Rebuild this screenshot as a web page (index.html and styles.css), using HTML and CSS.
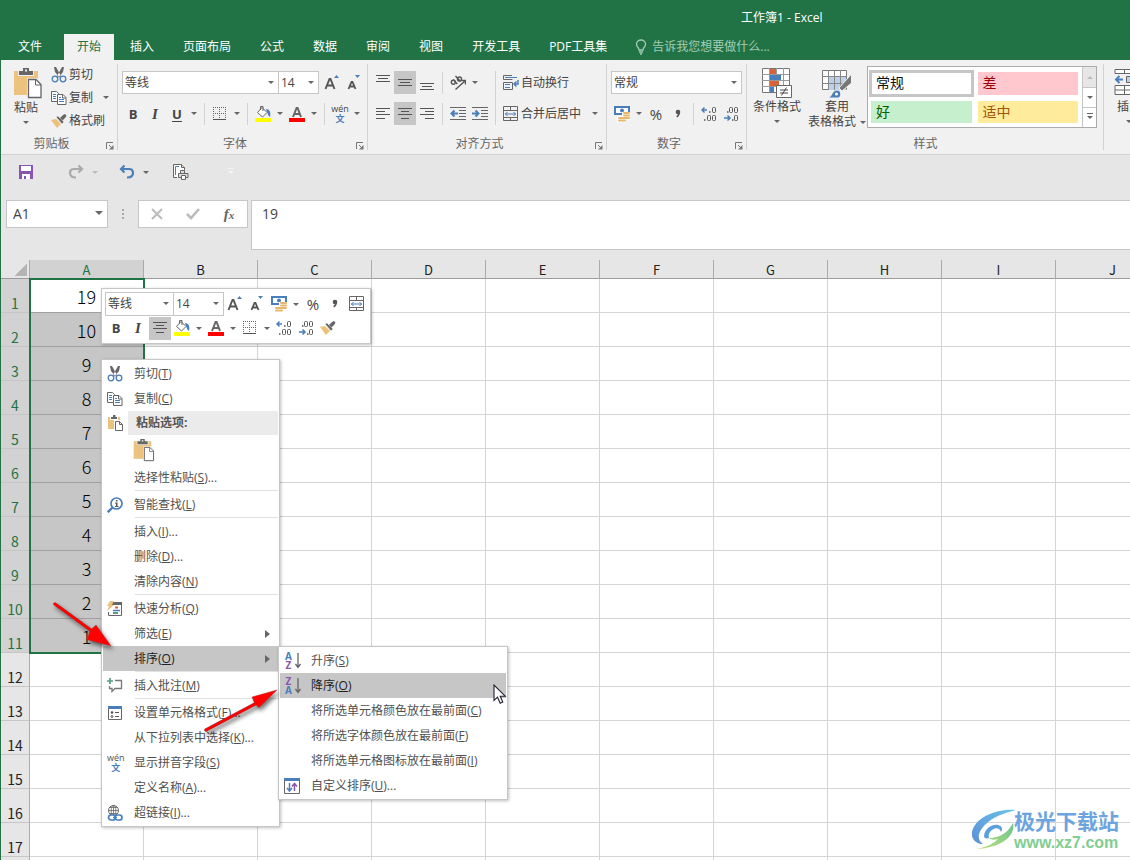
FILE: index.html
```html
<!DOCTYPE html>
<html lang="zh-CN">
<head>
<meta charset="utf-8">
<title>工作簿1 - Excel</title>
<link rel="stylesheet" href="styles.css">
</head>
<body>
<svg class="sprite" aria-hidden="true">
  <defs>
    <linearGradient id="swirl-blue" x1="0" y1="1" x2="1" y2="0"><stop offset="0" stop-color="#5b8fd6"/><stop offset="1" stop-color="#6cc3ea"/></linearGradient>
    <linearGradient id="swirl-green" x1="0" y1="1" x2="1" y2="0"><stop offset="0" stop-color="#c3e07a"/><stop offset="1" stop-color="#63c58c"/></linearGradient>
  </defs>
  <symbol id="i-cut" viewBox="0 0 16 16"><path d="M3 0l2 0L10 9 8.500 10.500 4 5zM13 0l-2 0L6 9l1.500 1.500L12 5z" fill="#666"/><circle cx="4" cy="12" r="2.800" fill="none" stroke="#4a7ebb" stroke-width="1.300"/><circle cx="12" cy="12" r="2.800" fill="none" stroke="#4a7ebb" stroke-width="1.300"/></symbol>
  <symbol id="i-copy" viewBox="0 0 16 16"><path d="M.500 1.500h5l2 2v8h-7z" fill="#fff" stroke="#666"/><path d="M2 4.500h3M2 6.500h3M2 8.500h3" stroke="#4a7ebb"/><path d="M6.500 4.500h5.500l3 3v7H6.500z" fill="#fff" stroke="#666"/><path d="M11.500 4.500v3.500H15" fill="none" stroke="#666"/><path d="M8 7.500h2M8 9.500h5M8 11.500h5" stroke="#4a7ebb"/></symbol>
  <symbol id="i-brush" viewBox="0 0 16 16"><path d="M0 7l5-1 5 5-4 4z" fill="#ecc17c"/><path d="M5 4l2-1 6 6-2 2z" fill="#666" stroke="#f1f1f1" stroke-width=".6"/><path d="M9 5l3-3 2-1 1.500 1.500L14.500 4.500 11.500 7.500z" fill="#666"/></symbol>
  <symbol id="i-paste" viewBox="0 0 30 32"><path d="M1 4h24v24H1z" fill="#ecc27f"/><path d="M5 3h16v6H5z" fill="#f1f1f1"/><path d="M6 8V4h4V1h6v3h4v4z" fill="#666"/><path d="M12 2.500h2v2h-2z" fill="#f1f1f1"/><path d="M14 11h10l5 5v16H14z" fill="#f1f1f1"/><path d="M15.500 12.500h7.500l5 5v13H15.500z" fill="#fff" stroke="#666" stroke-width="1.300"/><path d="M22.500 12.500v5.500H28" fill="none" stroke="#666"/></symbol>
  <symbol id="i-paste-small" viewBox="0 0 16 16"><path d="M1 2h12v12H1z" fill="#ecc27f"/><path d="M3 1h8v4H3z" fill="#fff"/><path d="M4 4V2h2V0h2.500v2H10v2z" fill="#666"/><path d="M7 5h6l3 3v8H7z" fill="#fff"/><path d="M8.500 6.500h4l3 3v6h-7z" fill="#fff" stroke="#666"/><path d="M12.500 6.500v3h3" fill="none" stroke="#666"/></symbol>
  <symbol id="i-grow" viewBox="0 0 16 16"><path d="M1.500 14L5.500 4h1L10.500 14M3.500 10.500h5.500" fill="none" stroke="#555" stroke-width="1.900"/><path d="M10 3l2.500-3L15 3z" fill="#4a7ebb"/></symbol>
  <symbol id="i-shrink" viewBox="0 0 16 16"><path d="M2.500 14L5.500 7h1L9.500 14M4 11.500h4" fill="none" stroke="#555" stroke-width="1.800"/><path d="M9 0h5l-2.500 3z" fill="#4a7ebb"/></symbol>
  <symbol id="i-border" viewBox="0 0 16 16"><path d="M1 1.500h14M1 7.500h14M1.500 1v12M7.500 1v12M13.500 1v12" stroke="#666" stroke-dasharray="1 1"/><path d="M1 13.500h13" stroke="#555"/></symbol>
  <symbol id="i-fill" viewBox="0 0 16 16"><path d="M7 1.500l5 5L7.500 11 2.500 6.500z" fill="#fff" stroke="#666"/><path d="M5.500 4V.5h2.500V5" fill="none" stroke="#666"/><path d="M11 3c4 0 5 4 4 8-2-1-2-3-3-5z" fill="#4a7ebb"/><path d="M0 12h16v4H0z" fill="#ff0"/></symbol>
  <symbol id="i-color" viewBox="0 0 16 16"><path d="M4 11L7.600 2h1L12 11M5.500 8h5.500" fill="none" stroke="#666" stroke-width="2"/><path d="M0 12h16v4H0z" fill="red"/></symbol>
  <symbol id="i-top" viewBox="0 0 16 16"><path d="M1 .500h14M3 3.500h10M1 6.500h14" stroke="#555"/></symbol>
  <symbol id="i-middle" viewBox="0 0 16 16"><path d="M1 4.500h14M3 7.500h10M1 10.500h14" stroke="#555"/></symbol>
  <symbol id="i-bottom" viewBox="0 0 16 16"><path d="M1 8.500h14M3 11.500h10M1 14.500h14" stroke="#555"/></symbol>
  <symbol id="i-left" viewBox="0 0 16 16"><path d="M1 2.500h14M1 5.500h9M1 8.500h14M1 12.500h9" stroke="#555"/></symbol>
  <symbol id="i-center" viewBox="0 0 16 16"><path d="M1 2.500h14M4 5.500h8M1 8.500h14M4 12.500h8" stroke="#555"/></symbol>
  <symbol id="i-right" viewBox="0 0 16 16"><path d="M1 2.500h14M6 5.500h9M1 8.500h14M6 12.500h9" stroke="#555"/></symbol>
  <symbol id="i-outdent" viewBox="0 0 16 16"><path d="M0 1.500h16M9 4.500h7M9 7.500h7M9 10.500h7M0 13.500h16" stroke="#666"/><path d="M8 7.500H2M4.500 4.500l-3 3 3 3" fill="none" stroke="#4a7ebb" stroke-width="2"/></symbol>
  <symbol id="i-indent" viewBox="0 0 16 16"><path d="M0 1.500h16M9 4.500h7M9 7.500h7M9 10.500h7M0 13.500h16" stroke="#666"/><path d="M0 7.500h6M3.500 4.500l3 3-3 3" fill="none" stroke="#4a7ebb" stroke-width="2"/></symbol>
  <symbol id="i-orient" viewBox="0 0 16 16"><ellipse cx="3.300" cy="7.300" rx="2" ry="2" fill="none" stroke="#555" stroke-width="1.400"/><path d="M3.300 4.500l4 4.500M5.500 1l5 5.500" fill="none" stroke="#555" stroke-width="1.400"/><circle cx="9.500" cy="4" r="2" fill="none" stroke="#555" stroke-width="1.400"/><path d="M5.500 14.500L15 6M11.500 5.500H15.500V9.500" fill="none" stroke="#555" stroke-width="1.400"/></symbol>
  <symbol id="i-wrap" viewBox="0 0 16 16"><path d="M9 .500H.500v4h9M.500 7.500h9v7h-9z" fill="none" stroke="#666"/><path d="M2 2.500h12M2 9.500h5M2 12.500h5" stroke="#4a7ebb"/><path d="M15 5v4h-4M13.500 6.500L11 9l2.500 2.500" fill="none" stroke="#4a7ebb" stroke-width="1.500"/></symbol>
  <symbol id="i-merge" viewBox="0 0 16 16"><path d="M.500.500h14v14H.500zM0 4.500h15M0 11.500h15M7.500 0v4M7.500 12v3" fill="none" stroke="#666"/><path d="M2 8h11M4.500 6L2.500 8l2 2M10.500 6l2 2-2 2" fill="none" stroke="#4a7ebb"/></symbol>
  <symbol id="i-money" viewBox="0 0 16 16"><path d="M1 1h14v7H1z" fill="#fff" stroke="#4a7ebb" stroke-width="2"/><circle cx="8" cy="4.500" r="2" fill="#4a7ebb"/><path d="M8 6h8v8h-4v2H3v-6h5z" fill="#fff"/><rect x="9" y="6" width="7" height="2" rx="1" fill="#e8b66c"/><rect x="9" y="8.500" width="7" height="2" rx="1" fill="#e8b66c"/><rect x="9" y="11" width="7" height="2" rx="1" fill="#e8b66c"/><rect x="4" y="11" width="6" height="2" rx="1" fill="#e8b66c"/><rect x="4" y="13.500" width="8" height="2" rx="1" fill="#e8b66c"/></symbol>
  <symbol id="i-incdec" viewBox="0 0 16 16"><path d="M1 4h5M3.500 1.500L1 4l2.500 2.500" fill="none" stroke="#4a7ebb" stroke-width="1.500"/><path d="M8 6h1.500M3 14h1.500" stroke="#555" stroke-width="1.400"/><rect x="11.500" y="1.500" width="3" height="5" rx="1" fill="none" stroke="#555"/><rect x="6.500" y="9.500" width="3" height="5" rx="1" fill="none" stroke="#555"/><rect x="11.500" y="9.500" width="3" height="5" rx="1" fill="none" stroke="#555"/></symbol>
  <symbol id="i-decdec" viewBox="0 0 16 16"><path d="M1 12h6M4.500 9.500L7 12l-2.500 2.500" fill="none" stroke="#4a7ebb" stroke-width="1.500"/><path d="M4 6h1.500M9 14h1.500" stroke="#555" stroke-width="1.400"/><rect x="11.500" y="9.500" width="3" height="5" rx="1" fill="none" stroke="#555"/><rect x="6.500" y="1.500" width="3" height="5" rx="1" fill="none" stroke="#555"/><rect x="11.500" y="1.500" width="3" height="5" rx="1" fill="none" stroke="#555"/></symbol>
  <symbol id="i-comma" viewBox="0 0 16 16"><circle cx="8" cy="6" r="2.300" fill="#555"/><path d="M9.300 6c0 2.500-.8 3.800-2.600 4.800" fill="none" stroke="#555" stroke-width="1.500"/></symbol>
  <symbol id="i-launch" viewBox="0 0 8 8"><path d="M.500 7V.500H7M3 3l3 3" fill="none" stroke="#777"/><path d="M7.500 3v4.500H3z" fill="#777"/></symbol>
  <symbol id="i-cond" viewBox="0 0 30 30"><path d="M.500.500h27v24h-27z" fill="#fff" stroke="#777"/><path d="M7.500 0v24M14.500 0v24M21.500 0v24M0 6.500h27M0 12.500h27M0 18.500h27" stroke="#999"/><path d="M8 1h6v5H8zM8 13h9v5H8z" fill="#d9623b"/><path d="M8 7h11v5H8zM8 19h4v5H8z" fill="#4a7ebb"/><path d="M14.500 17.500h15v12h-15z" fill="#fff" stroke="#666"/><path d="M18 22h8M18 25h8M24.500 19.500l-5 8" stroke="#444"/></symbol>
  <symbol id="i-table" viewBox="0 0 30 30"><path d="M.500 2.500h24v19h-24z" fill="#fff" stroke="#777"/><path d="M7 9h17v13H7z" fill="#bdd0e9"/><path d="M6.500 2v20M12.500 2v20M18.500 2v20M0 8.500h25M0 15.500h25" stroke="#888"/><path d="M29.500 6v9l-9.500 8-3-3z" fill="#777" stroke="#f1f1f1"/><path d="M6 30c4-1 4-8 9-8 4 0 5 5 2 8z" fill="#4a7ebb" stroke="#f1f1f1"/><circle cx="14.500" cy="26" r="1.500" fill="#fff"/></symbol>
  <symbol id="i-insert" viewBox="0 0 30 30"><path d="M1 1.500h28v4H1zM10.500 1v5M20.500 1v5M1 17.500h28v9H1zM1 22h28M10.500 17v10M20.500 17v10" fill="#fff" stroke="#666"/><path d="M12.500 8.500h16v6h-16z" fill="#bdd0e9" stroke="#666"/><path d="M9 11.500H3M5.500 8l-3.500 3.500L5.500 15" fill="none" stroke="#4a7ebb" stroke-width="2"/></symbol>
  <symbol id="i-save" viewBox="0 0 16 16"><path d="M1 1h14v14H1z" fill="#8a55ad"/><path d="M3 2h10v5H3zM4 10h8v5H4z" fill="#fff"/><path d="M6 12h2v3H6z" fill="#8a55ad"/></symbol>
  <symbol id="i-undo" viewBox="0 0 16 16"><path d="M5.500 1.500L2 5l3.500 3.500M2 5h8c3 0 4 2 4 4s-1 4.500-6 4.500" fill="none" stroke="currentColor" stroke-width="2.200"/></symbol>
  <symbol id="i-preview" viewBox="0 0 16 16"><path d="M4 13.500H.500V.500h8l3 3V6" fill="#fff" stroke="#666"/><path d="M2.500 11V2.500H6" fill="none" stroke="#4a7ebb"/><path d="M8.500.500v3h3M7.500 9V6.500h4V9M5.500 9.500h9.500v4H5.500z" fill="#ddd" stroke="#666"/><path d="M8.500 11.500h4v4h-4z" fill="#fff" stroke="#666"/></symbol>
  <symbol id="i-x" viewBox="0 0 16 16"><path d="M3 3l10 10M13 3L3 13" stroke="#bbb" stroke-width="2"/></symbol>
  <symbol id="i-check" viewBox="0 0 16 16"><path d="M2 8l4 4 8-9" fill="none" stroke="#bbb" stroke-width="2.600"/></symbol>
  <symbol id="i-bulb" viewBox="0 0 12 16"><path d="M4 11C4 8.500 1.500 8 1.500 5.300a4.500 4.300 0 0 1 9 0C10.500 8 8 8.500 8 11zM4 13h4M5 15h2" fill="none" stroke="#a3cdb4" stroke-width="1.300"/></symbol>
  <symbol id="i-find" viewBox="0 0 16 16"><circle cx="9.500" cy="6.500" r="5.500" fill="#fff" stroke="#4a7ebb" stroke-width="1.700"/><path d="M5.500 10.500L.8 15.200" stroke="#4a7ebb" stroke-width="2.400"/><path d="M9 3h1.500v1.500H9zM8 5.500h2.500V9h1v1H8V9h1V6.500H8z" fill="#555"/></symbol>
  <symbol id="i-quick" viewBox="0 0 16 16"><path d="M5 2.500h9.500v12H1.500V11" fill="none" stroke="#666"/><path d="M5 1h10v3H5z" fill="#666"/><path d="M3 0h4L5 4h2L0 10l2-5H0z" fill="#ecc27f"/><path d="M8 6.500h3" stroke="#d9623b" stroke-width="2"/><path d="M6 9.500h7" stroke="#4a7ebb" stroke-width="1.500"/><path d="M6 12h5" stroke="#55a080" stroke-width="2"/></symbol>
  <symbol id="i-note" viewBox="0 0 16 16"><path d="M8 2.500h6.500v8H8l-3 3v-3H2.500V8" fill="none" stroke="#777" stroke-width="1.300"/><path d="M3 0v6M0 3h6" stroke="#55a080" stroke-width="1.700"/></symbol>
  <symbol id="i-format" viewBox="0 0 16 16"><path d="M1.500 1.500h13v13h-13z" fill="#fff" stroke="#666"/><path d="M1 1h14v3H1z" fill="#4a7ebb"/><circle cx="5" cy="7.500" r="1.300" fill="#555"/><circle cx="5" cy="11.500" r="1" fill="none" stroke="#555"/><path d="M8 7.500h4M8 11.500h4" stroke="#555"/></symbol>
  <symbol id="i-link" viewBox="0 0 16 16"><circle cx="6.500" cy="5.500" r="5" fill="#fff" stroke="#666"/><path d="M1.500 5.500h10M6.500.500v10M3 2.500h7M2.500 8.500h8" stroke="#666" stroke-width=".8"/><ellipse cx="6.500" cy="5.500" rx="2.300" ry="5" fill="none" stroke="#666" stroke-width=".8"/><rect x="1.500" y="10" width="7" height="5" rx="2.500" fill="#fff" stroke="#4a7ebb" stroke-width="1.700"/><rect x="8" y="10" width="7" height="5" rx="2.500" fill="#fff" stroke="#4a7ebb" stroke-width="1.700"/><path d="M6 12.500h4" stroke="#4a7ebb" stroke-width="1.500"/></symbol>
  <symbol id="i-down" viewBox="0 0 6 16"><path d="M3 0v14M.500 11L3 14.500 5.500 11" fill="none" stroke="#666" stroke-width="1.300"/></symbol>
  <symbol id="i-custom" viewBox="0 0 16 16"><path d="M.500 1h15v14.500H.500z" fill="#fff" stroke="#666"/><path d="M0 0h16v3H0z" fill="#4a7ebb"/><path d="M5.500 5v8M3 10l2.500 3L8 10" fill="none" stroke="#4a7ebb" stroke-width="1.500"/><path d="M10.500 13V5.500M8 8.500l2.500-3 2.500 3" fill="none" stroke="#8a55ad" stroke-width="1.500"/></symbol>
</svg>

<div class="app">
  <header class="titlebar"><h1>工作簿1 - Excel</h1></header>

  <nav class="tabs" aria-label="功能区">
    <button class="tab file">文件</button><button class="tab active">开始</button><button class="tab">插入</button><button class="tab">页面布局</button><button class="tab">公式</button><button class="tab">数据</button><button class="tab">审阅</button><button class="tab">视图</button><button class="tab">开发工具</button><button class="tab">PDF工具集</button>
    <label class="tell"><svg width="12" height="16"><use href="#i-bulb"/></svg><input type="text" aria-label="告诉我您想要做什么" placeholder="告诉我您想要做什么..."></label>
  </nav>

  <section class="ribbon">
    <div class="group clipboard">
      <div class="body">
        <button class="big"><svg width="30" height="32"><use href="#i-paste"/></svg><span>粘贴</span><i class="caret"></i></button>
        <div class="stack">
          <button class="item"><svg class="ic"><use href="#i-cut"/></svg>剪切</button>
          <button class="item"><svg class="ic"><use href="#i-copy"/></svg>复制<i class="caret push"></i></button>
          <button class="item"><svg class="ic"><use href="#i-brush"/></svg>格式刷</button>
        </div>
      </div>
      <div class="foot">剪贴板<button class="launch" aria-label="剪贴板设置"><svg width="8" height="8"><use href="#i-launch"/></svg></button></div>
    </div>

    <div class="group font">
      <div class="body rows">
        <div class="row">
          <span class="combo family"><select aria-label="字体"><option>等线</option></select></span><span class="combo size"><select aria-label="字号"><option>14</option></select></span>
          <button class="tb lead" aria-label="增大字号"><svg class="ic"><use href="#i-grow"/></svg></button>
          <button class="tb" aria-label="减小字号"><svg class="ic"><use href="#i-shrink"/></svg></button>
        </div>
        <div class="row">
          <button class="tb"><b>B</b></button><button class="tb"><em>I</em></button><button class="tb"><b class="ul">U</b></button><button class="drop" aria-label="下划线选项"><i class="caret"></i></button>
          <span class="sep"></span>
          <button class="tb" aria-label="边框"><svg class="ic"><use href="#i-border"/></svg></button><button class="drop" aria-label="边框选项"><i class="caret"></i></button>
          <span class="sep"></span>
          <button class="tb" aria-label="填充颜色"><svg class="ic"><use href="#i-fill"/></svg></button><button class="drop" aria-label="填充选项"><i class="caret"></i></button>
          <button class="tb" aria-label="字体颜色"><svg class="ic"><use href="#i-color"/></svg></button><button class="drop" aria-label="颜色选项"><i class="caret"></i></button>
          <span class="sep"></span>
          <button class="tb pinyin"><span>wén</span><span>文</span></button><button class="drop" aria-label="拼音选项"><i class="caret"></i></button>
        </div>
      </div>
      <div class="foot">字体<button class="launch" aria-label="字体设置"><svg width="8" height="8"><use href="#i-launch"/></svg></button></div>
    </div>

    <div class="group align">
      <div class="body">
        <div class="rows">
          <div class="row">
            <button class="tb" aria-label="顶端对齐"><svg class="ic"><use href="#i-top"/></svg></button><button class="tb on" aria-label="垂直居中"><svg class="ic"><use href="#i-middle"/></svg></button><button class="tb" aria-label="底端对齐"><svg class="ic"><use href="#i-bottom"/></svg></button>
            <span class="sep"></span>
            <button class="tb" aria-label="方向"><svg class="ic"><use href="#i-orient"/></svg></button><button class="drop" aria-label="方向选项"><i class="caret"></i></button>
          </div>
          <div class="row">
            <button class="tb" aria-label="左对齐"><svg class="ic"><use href="#i-left"/></svg></button><button class="tb on" aria-label="居中"><svg class="ic"><use href="#i-center"/></svg></button><button class="tb" aria-label="右对齐"><svg class="ic"><use href="#i-right"/></svg></button>
            <span class="sep"></span>
            <button class="tb" aria-label="减少缩进量"><svg class="ic"><use href="#i-outdent"/></svg></button><button class="tb" aria-label="增加缩进量"><svg class="ic"><use href="#i-indent"/></svg></button>
          </div>
        </div>
        <span class="sep tall"></span>
        <div class="rows wide">
          <div class="row"><button class="item"><svg class="ic"><use href="#i-wrap"/></svg>自动换行</button></div>
          <div class="row"><button class="item"><svg class="ic"><use href="#i-merge"/></svg>合并后居中<i class="caret push"></i></button></div>
        </div>
      </div>
      <div class="foot">对齐方式<button class="launch" aria-label="对齐设置"><svg width="8" height="8"><use href="#i-launch"/></svg></button></div>
    </div>

    <div class="group number">
      <div class="body rows">
        <div class="row"><span class="combo full"><select aria-label="数字格式"><option>常规</option></select></span></div>
        <div class="row">
          <button class="tb" aria-label="会计数字格式"><svg class="ic"><use href="#i-money"/></svg></button><button class="drop" aria-label="货币选项"><i class="caret"></i></button>
          <button class="tb pct">%</button><button class="tb" aria-label="千位分隔样式"><svg class="ic"><use href="#i-comma"/></svg></button>
          <span class="sep"></span>
          <button class="tb" aria-label="增加小数位数"><svg class="ic"><use href="#i-incdec"/></svg></button><button class="tb" aria-label="减少小数位数"><svg class="ic"><use href="#i-decdec"/></svg></button>
        </div>
      </div>
      <div class="foot">数字<button class="launch" aria-label="数字设置"><svg width="8" height="8"><use href="#i-launch"/></svg></button></div>
    </div>

    <div class="group styles">
      <div class="body">
        <button class="big cond"><svg width="30" height="30"><use href="#i-cond"/></svg><span>条件格式</span><i class="caret"></i></button>
        <button class="big tablefmt"><svg width="30" height="30"><use href="#i-table"/></svg><span>套用</span><span class="line">表格格式<i class="caret"></i></span></button>
        <div class="gallery">
          <div class="swatches">
            <button class="sw normal">常规</button><button class="sw bad">差</button>
            <button class="sw good">好</button><button class="sw neutral">适中</button>
          </div>
          <div class="scroller">
            <button class="off" aria-label="上一行"><i class="caret up"></i></button><button aria-label="下一行"><i class="caret"></i></button><button aria-label="更多"><i class="caret more"></i></button>
          </div>
        </div>
      </div>
      <div class="foot">样式</div>
    </div>

    <div class="group cells">
      <div class="body"><button class="big"><svg width="30" height="30"><use href="#i-insert"/></svg><span>插入</span><i class="caret"></i></button></div>
    </div>
  </section>

  <div class="quick">
    <button class="q" aria-label="保存"><svg class="ic"><use href="#i-save"/></svg></button>
    <button class="q redo" aria-label="恢复"><svg class="ic flip"><use href="#i-undo"/></svg><i class="caret"></i></button>
    <button class="q undo" aria-label="撤消"><svg class="ic"><use href="#i-undo"/></svg><i class="caret"></i></button>
    <button class="q preview" aria-label="打印预览"><svg class="ic"><use href="#i-preview"/></svg></button>
    <button class="q custom" aria-label="自定义快速访问工具栏"><i class="caret more"></i></button>
  </div>

  <div class="formula">
    <span class="combo name"><input type="text" aria-label="名称框" value="A1"></span>
    <span class="dots"></span>
    <div class="fx"><button aria-label="取消"><svg class="ic"><use href="#i-x"/></svg></button><button aria-label="输入"><svg class="ic"><use href="#i-check"/></svg></button><button aria-label="插入函数"><em>f<small>x</small></em></button></div>
    <textarea aria-label="编辑栏">19</textarea>
  </div>

  <main class="sheet"><table id="grid"></table><div class="selection"></div></main>

  <div class="mini" role="toolbar" aria-label="浮动工具栏">
    <div class="row">
      <span class="combo mfamily"><select aria-label="字体"><option>等线</option></select></span><span class="combo msize"><select aria-label="字号"><option>14</option></select></span>
      <button class="tb" aria-label="增大字号"><svg class="ic"><use href="#i-grow"/></svg></button><button class="tb" aria-label="减小字号"><svg class="ic"><use href="#i-shrink"/></svg></button>
      <button class="tb" aria-label="会计数字格式"><svg class="ic"><use href="#i-money"/></svg></button><button class="drop" aria-label="货币选项"><i class="caret"></i></button>
      <button class="tb pct">%</button><button class="tb" aria-label="千位分隔样式"><svg class="ic"><use href="#i-comma"/></svg></button><button class="tb" aria-label="合并后居中"><svg class="ic"><use href="#i-merge"/></svg></button>
    </div>
    <div class="row">
      <button class="tb"><b>B</b></button><button class="tb"><em>I</em></button><button class="tb on" aria-label="居中"><svg class="ic"><use href="#i-center"/></svg></button>
      <button class="tb" aria-label="填充颜色"><svg class="ic"><use href="#i-fill"/></svg></button><button class="drop" aria-label="填充选项"><i class="caret"></i></button>
      <button class="tb" aria-label="字体颜色"><svg class="ic"><use href="#i-color"/></svg></button><button class="drop" aria-label="颜色选项"><i class="caret"></i></button>
      <button class="tb" aria-label="边框"><svg class="ic"><use href="#i-border"/></svg></button><button class="drop" aria-label="边框选项"><i class="caret"></i></button>
      <button class="tb" aria-label="增加小数位数"><svg class="ic"><use href="#i-incdec"/></svg></button><button class="tb" aria-label="减少小数位数"><svg class="ic"><use href="#i-decdec"/></svg></button><button class="tb" aria-label="格式刷"><svg class="ic"><use href="#i-brush"/></svg></button>
    </div>
  </div>

  <div class="menu context" role="menu">
    <button class="mi" role="menuitem"><span class="slot"><svg class="ic"><use href="#i-cut"/></svg></span><span>剪切(<u>T</u>)</span></button>
    <button class="mi" role="menuitem"><span class="slot"><svg class="ic"><use href="#i-copy"/></svg></span><span>复制(<u>C</u>)</span></button>
    <div class="mhead"><span class="slot"><svg class="ic"><use href="#i-paste-small"/></svg></span><strong>粘贴选项:</strong></div>
    <button class="mi pasteopt" role="menuitem" aria-label="粘贴"><svg width="22" height="24"><use href="#i-paste"/></svg></button>
    <button class="mi" role="menuitem"><span class="slot"></span><span>选择性粘贴(<u>S</u>)...</span></button>
    <hr>
    <button class="mi" role="menuitem"><span class="slot"><svg class="ic"><use href="#i-find"/></svg></span><span>智能查找(<u>L</u>)</span></button>
    <hr>
    <button class="mi" role="menuitem"><span class="slot"></span><span>插入(<u>I</u>)...</span></button>
    <button class="mi" role="menuitem"><span class="slot"></span><span>删除(<u>D</u>)...</span></button>
    <button class="mi" role="menuitem"><span class="slot"></span><span>清除内容(<u>N</u>)</span></button>
    <hr>
    <button class="mi" role="menuitem"><span class="slot"><svg class="ic"><use href="#i-quick"/></svg></span><span>快速分析(<u>Q</u>)</span></button>
    <button class="mi sub" role="menuitem"><span class="slot"></span><span>筛选(<u>E</u>)</span></button>
    <button class="mi sub hot" role="menuitem"><span class="slot"></span><span>排序(<u>O</u>)</span></button>
    <hr>
    <button class="mi" role="menuitem"><span class="slot"><svg class="ic"><use href="#i-note"/></svg></span><span>插入批注(<u>M</u>)</span></button>
    <hr>
    <button class="mi" role="menuitem"><span class="slot"><svg class="ic"><use href="#i-format"/></svg></span><span>设置单元格格式(<u>F</u>)...</span></button>
    <button class="mi" role="menuitem"><span class="slot"></span><span>从下拉列表中选择(<u>K</u>)...</span></button>
    <button class="mi" role="menuitem"><span class="slot"><span class="pinyin"><span>wén</span><span>文</span></span></span><span>显示拼音字段(<u>S</u>)</span></button>
    <button class="mi" role="menuitem"><span class="slot"></span><span>定义名称(<u>A</u>)...</span></button>
    <button class="mi" role="menuitem"><span class="slot"><svg class="ic"><use href="#i-link"/></svg></span><span>超链接(<u>I</u>)...</span></button>
  </div>

  <div class="menu submenu" role="menu">
    <button class="mi" role="menuitem"><span class="slot sort"><span><b class="a">A</b><b class="z">Z</b></span><svg width="6" height="16"><use href="#i-down"/></svg></span><span>升序(<u>S</u>)</span></button>
    <button class="mi hot" role="menuitem"><span class="slot sort"><span><b class="z">Z</b><b class="a">A</b></span><svg width="6" height="16"><use href="#i-down"/></svg></span><span>降序(<u>O</u>)</span></button>
    <button class="mi" role="menuitem"><span class="slot"></span><span>将所选单元格颜色放在最前面(<u>C</u>)</span></button>
    <button class="mi" role="menuitem"><span class="slot"></span><span>将所选字体颜色放在最前面(<u>F</u>)</span></button>
    <button class="mi" role="menuitem"><span class="slot"></span><span>将所选单元格图标放在最前面(<u>I</u>)</span></button>
    <button class="mi" role="menuitem"><span class="slot"><svg class="ic"><use href="#i-custom"/></svg></span><span>自定义排序(<u>U</u>)...</span></button>
  </div>

  <svg class="arrow first" width="72" height="56" viewBox="0 0 72 56"><path d="M5 5L42 32" stroke="#a33" stroke-width="3.400" stroke-linecap="round"/><path d="M5 5L42 32" stroke="red" stroke-width="2.400" stroke-linecap="round"/><path d="M61 47L37 40.500 40 31.500 46 26z" fill="red" stroke="#a33" stroke-width=".5"/></svg>
  <svg class="arrow second" width="84" height="52" viewBox="0 0 84 52"><path d="M5 44L54 18" stroke="#a33" stroke-width="3.400" stroke-linecap="round"/><path d="M5 44L54 18" stroke="red" stroke-width="2.400" stroke-linecap="round"/><path d="M76 4L58 21.500 54 18 51 11z" fill="red" stroke="#a33" stroke-width=".5"/></svg>
  <svg class="cursor" width="14" height="21" viewBox="0 0 14 21"><path d="M1 1v15.500l3.500-3.300 2.700 6 2.600-1.200-2.600-5.800h5z" fill="#fff" stroke="#223" stroke-width="1.100"/></svg>

  <a class="brand" href="#">
    <svg width="46" height="42" viewBox="0 0 46 42"><path d="M45 1C27-1 4 8 1 23c-1 8 5 12 11 12C5 31 7 22 15 15 22 8 33 4 45 1z" fill="url(#swirl-blue)"/><path d="M13 27c1-8 8-12 14-11 4 1 5 4 3 7-1-4-5-5-9-2-3 2-4 5-3 8-3 1-5 0-5-2z" fill="#5b9fdc"/><path d="M42 14c3 13-12 25-37 26 11-2 17-5 22-10-4 1-7 1-9-1C28 29 37 24 42 14z" fill="url(#swirl-green)"/></svg>
    <span class="words"><strong>极光下载站</strong><span class="url">www.xz7.com</span></span>
  </a>
</div>
<script src="sheet.js"></script>
</body>
</html>
```

FILE: styles.css
```css
* { box-sizing: border-box; }
body { margin: 0; font: 12px/16px "Open Sans", "Noto Sans CJK SC", sans-serif; color: #444; }
button, input, select, textarea { font: inherit; color: inherit; background: none; border: 0; padding: 0; margin: 0; border-radius: 0; outline: 0; }
button { display: flex; align-items: center; justify-content: center; white-space: nowrap; }
svg { display: block; flex: none; }
.sprite { position: absolute; width: 0; height: 0; }
.ic { width: 16px; height: 16px; }
.app { position: relative; display: flex; flex-direction: column; height: 100vh; overflow: hidden; border-left: 1px solid #217346; background: #e6e6e6; }

.titlebar { height: 34px; background: #217346; color: #fff; padding: 10px 0 0 740px; flex: none; }
.titlebar h1 { margin: 0; font: inherit; white-space: nowrap; }
.tabs { display: flex; gap: 3px; height: 26px; flex: none; padding-left: 4px; background: #217346; color: #fff; }
.tab { padding: 0 13px; }
.tab.file { margin-right: 6px; }
.tab.active { background: #f1f1f1; color: #217346; }
.tell { display: flex; align-items: center; gap: 5px; margin-left: 12px; flex: 1; }
.tell input { flex: 1; }
.tell input::placeholder { color: #a3cdb4; opacity: 1; }

.ribbon { display: flex; height: 95px; flex: none; background: #f1f1f1; border-bottom: 1px solid #d2d2d2; overflow: hidden; }
.group { position: relative; display: flex; flex-direction: column; flex: none; padding-top: 3px; }
.group::after { content: ""; position: absolute; right: 0; top: 4px; bottom: 4px; width: 1px; background: #d2d2d2; }
.body { display: flex; height: 70px; }
.foot { display: flex; justify-content: center; align-items: center; height: 21px; color: #666; padding-right: 16px; }
.launch { position: absolute; right: 4px; bottom: 4px; }
.clipboard { width: 117px; }
.font { width: 250px; }
.align { width: 239px; }
.number { width: 140px; }
.styles { width: 357px; }
.styles .foot { padding-right: 0; }
.cells { width: 120px; }
.rows { display: flex; flex-direction: column; gap: 8px; padding: 8px 3px 0 4px; }
.align .rows { padding-right: 0; }
.row { display: flex; align-items: center; height: 23px; }
.body .wide { padding-left: 7px; flex: 1; }
.big { flex-direction: column; justify-content: flex-start; padding-top: 4px; }
.big svg { margin-bottom: 1px; }
.big .caret { margin-top: 5px; }
.clipboard .big { width: 50px; }
.clipboard .big svg { margin-left: 4px; }
.big.cond { width: 60px; padding-top: 5px; }
.big.tablefmt { width: 60px; padding-top: 5px; }
.big .line { display: flex; align-items: center; gap: 4px; line-height: 14px; }
.big .line .caret { margin: 0; }
.cells .big { width: 50px; padding-top: 5px; }
.stack { display: flex; flex-direction: column; flex: 1; }
.stack .item { height: 23px; }
.item { justify-content: flex-start; gap: 2px; width: 100%; }
.push { margin-left: auto; margin-right: 9px; }
.tb { width: 22px; height: 23px; flex: none; font-size: 13px; }
.tb.on { background: #c6c6c6; }
.tb em, .fx em { font-family: "Liberation Serif", serif; font-weight: bold; font-size: 15px; }
.fx em { color: #666; }
.fx small { font-size: 11px; }
.ul { text-decoration: underline; text-underline-offset: 2px; }
.lead { margin-left: 2px; }
.pct { font-size: 15px; }
.drop { width: 12px; height: 23px; flex: none; }
.sep { width: 1px; height: 22px; margin: 0 4px; background: #d2d2d2; flex: none; }
.tall { height: 54px; margin: 8px 0 0 4px; }
.caret { width: 0; height: 0; border: 3px solid transparent; border-top-color: #666; border-bottom: 0; flex: none; }
.caret.up { border-top: 0; border-bottom: 3px solid #bbb; }
.caret.more { position: relative; }
.caret.more::before { content: ""; position: absolute; left: -3px; top: -6px; width: 6px; height: 1px; background: #666; }
.pinyin { display: flex; flex-direction: column; align-items: center; line-height: 10px; font-size: 9px; }
.pinyin span + span { color: #4a7ebb; font-weight: bold; }

.combo { position: relative; display: flex; height: 23px; background: #fff; border: 1px solid #c6c6c6; flex: none; }
.combo select, .combo input { appearance: none; width: 100%; padding: 0 2px; }
.combo::after { content: ""; position: absolute; right: 4px; top: 9px; border: 3px solid transparent; border-top-color: #666; border-bottom: 0; pointer-events: none; }
.family { width: 157px; }
.size { width: 40px; border-left: 0; }
.full { width: 131px; }

.gallery { display: flex; width: 230px; height: 62px; margin-top: 3px; background: #fff; border: 1px solid #ababab; }
.swatches { display: grid; grid-template-columns: 1fr 1fr; gap: 6px; flex: 1; padding: 5px 4px 4px 3px; }
.sw { justify-content: flex-start; padding-left: 5px; font-size: 14px; }
.normal { background: #fff; color: #111; outline: 3px solid #c6c6c6; outline-offset: -1px; }
.bad { background: #ffc7ce; color: #9c0006; }
.good { background: #c6efce; color: #006100; }
.neutral { background: #ffeb9c; color: #9c5700; }
.scroller { display: grid; grid-template-rows: repeat(3, 1fr); width: 14px; border-left: 1px solid #c6c6c6; }
.scroller button + button { border-top: 1px solid #c6c6c6; }
.scroller .off { background: #e6e6e6; }

.quick { display: flex; align-items: center; gap: 34px; height: 34px; flex: none; padding-left: 17px; }
.q { gap: 8px; }
.redo { color: #aaa; }
.undo { color: #4a7ebb; margin-left: -13px; }
.redo .caret { border-top-color: #bbb; }
.flip { transform: scaleX(-1); }
.preview { margin-left: -10px; }
.custom { margin-left: 5px; }
.custom .caret { border-top-color: #f4f4f4; }
.custom .caret::before { background: #f4f4f4; }

.formula { display: flex; align-items: flex-start; height: 71px; flex: none; padding: 11px 0 0 5px; }
.combo.name { width: 102px; height: 28px; font-size: 14px; }
.name input { padding: 0 6px; }
.name::after { top: 10px; border-width: 4px 4px 0; }
.dots { width: 2px; height: 11px; margin: 9px 14px 0; background: repeating-linear-gradient(#aaa 0 2px, transparent 2px 4px); }
.fx { display: grid; grid-template-columns: repeat(3, 1fr); width: 110px; height: 28px; background: #fff; border: 1px solid #c6c6c6; }
.formula textarea { flex: 1; height: 50px; margin-left: 3px; padding: 5px 10px; background: #fff; border: 1px solid #c6c6c6; border-right: 0; resize: none; font-size: 14px; overflow: hidden; }

.sheet { position: relative; flex: 1; overflow: hidden; background: #fff; }
.sheet table { table-layout: fixed; width: 1169px; border-spacing: 0; font-family: "Noto Sans CJK SC", sans-serif; }
.sheet th { height: 19px; padding: 2px 0 0; font-weight: normal; font-size: 13px; line-height: 16px; color: #222; background: #e6e6e6; border-right: 1px solid #ababab; border-bottom: 1px solid #9b9b9b; }
.sheet .corner { width: 29px; background: linear-gradient(135deg, transparent 50%, #b4b4b4 50%) 14px 4px / 12px 12px no-repeat #e6e6e6; }
.sheet tbody th { height: 34px; padding: 0; vertical-align: bottom; border-bottom-color: #c6c6c6; font-size: 14px; line-height: 17px; }
.sheet .picked { background: #d2d2d2; color: #217346; }
.sheet td { padding: 0; border-right: 1px solid #d4d4d4; border-bottom: 1px solid #d4d4d4; text-align: center; font-size: 18px; line-height: 32px; font-weight: 300; color: #000; }
.sheet .value { background: #c6c6c6; border-bottom-color: #a0a0a0; }
.sheet .cursor-cell { background: #fff; }
.selection { position: absolute; left: 28px; top: 18px; width: 116px; height: 376px; border: 2px solid #217346; }

.mini, .menu { position: absolute; background: #fff; border: 1px solid #c6c6c6; box-shadow: 1px 1px 3px rgba(0, 0, 0, .25); }
.mini { left: 100px; top: 288px; width: 270px; padding: 3px 2px 3px 3px; }
.mini .row { height: 24px; }
.mini .combo { height: 24px; }
.mfamily { width: 69px; }
.msize { width: 50px; border-left: 0; }
.menu { padding: 1px; color: #505050; }
.context { left: 100px; top: 359px; width: 179px; }
.submenu { left: 277px; top: 646px; width: 230px; }
.mi { position: relative; justify-content: flex-start; width: 100%; height: 25px; }
.slot { display: flex; align-items: center; width: 31px; padding-left: 4px; flex: none; }
.hot { background: #c6c6c6; color: #222; }
.sub::after { content: ""; position: absolute; right: 8px; border: 4px solid transparent; border-left: 5px solid #666; border-right: 0; }
.mhead { display: flex; align-items: center; height: 24px; background: linear-gradient(#ebebeb, #ebebeb) 25px 0 no-repeat; }
.mhead strong { padding-left: 2px; color: #555; }
.pasteopt { height: 30px; padding-left: 30px; }
.menu hr { height: 1px; margin: 0 0 1px 32px; border: 0; background: #e1e1e1; }
.menu .sort { padding-left: 5px; gap: 3px; }
.sort span { display: flex; flex-direction: column; font-size: 10px; line-height: 9px; }
.a { color: #4a7ebb; }
.z { color: #8a55ad; }

.arrow { position: absolute; filter: drop-shadow(2px 3px 2px rgba(0, 0, 0, .55)); }
.first { left: 49px; top: 599px; }
.second { left: 200px; top: 686px; }
.cursor { position: absolute; left: 492px; top: 684px; }
.brand { position: absolute; right: 11px; bottom: 8px; display: flex; align-items: center; text-decoration: none; white-space: nowrap; }
.brand svg { margin-right: -3px; }
.words { display: flex; flex-direction: column; }
.brand strong { font-size: 21px; line-height: 26px; color: #6ba4e0; }
.url { font: bold 16px/18px "Liberation Sans", sans-serif; color: #7fce92; }
```

FILE: sheet.js
```js
const columns = "ABCDEFGHIJ".split("");
const values = [19, 10, 9, 8, 7, 6, 5, 4, 3, 2, 1];
const numberedRows = 17;

const head = "<thead><tr><th class='corner'></th>" +
  columns.map((c, i) => `<th scope="col"${i === 0 ? " class='picked'" : ""}>${c}</th>`).join("") +
  "</tr></thead>";

let body = "";
for (let r = 0; r <= numberedRows; r++) {
  const picked = r < values.length;
  body += `<tr><th scope="row"${picked ? " class='picked'" : ""}>${r < numberedRows ? r + 1 : ""}</th>`;
  columns.forEach((c, i) => {
    const filled = picked && i === 0;
    const cls = filled ? (r === 0 ? "value cursor-cell" : "value") : "";
    body += `<td class="${cls}">${filled ? values[r] : ""}</td>`;
  });
  body += "</tr>";
}

document.getElementById("grid").innerHTML = head + `<tbody>${body}</tbody>`;
```
